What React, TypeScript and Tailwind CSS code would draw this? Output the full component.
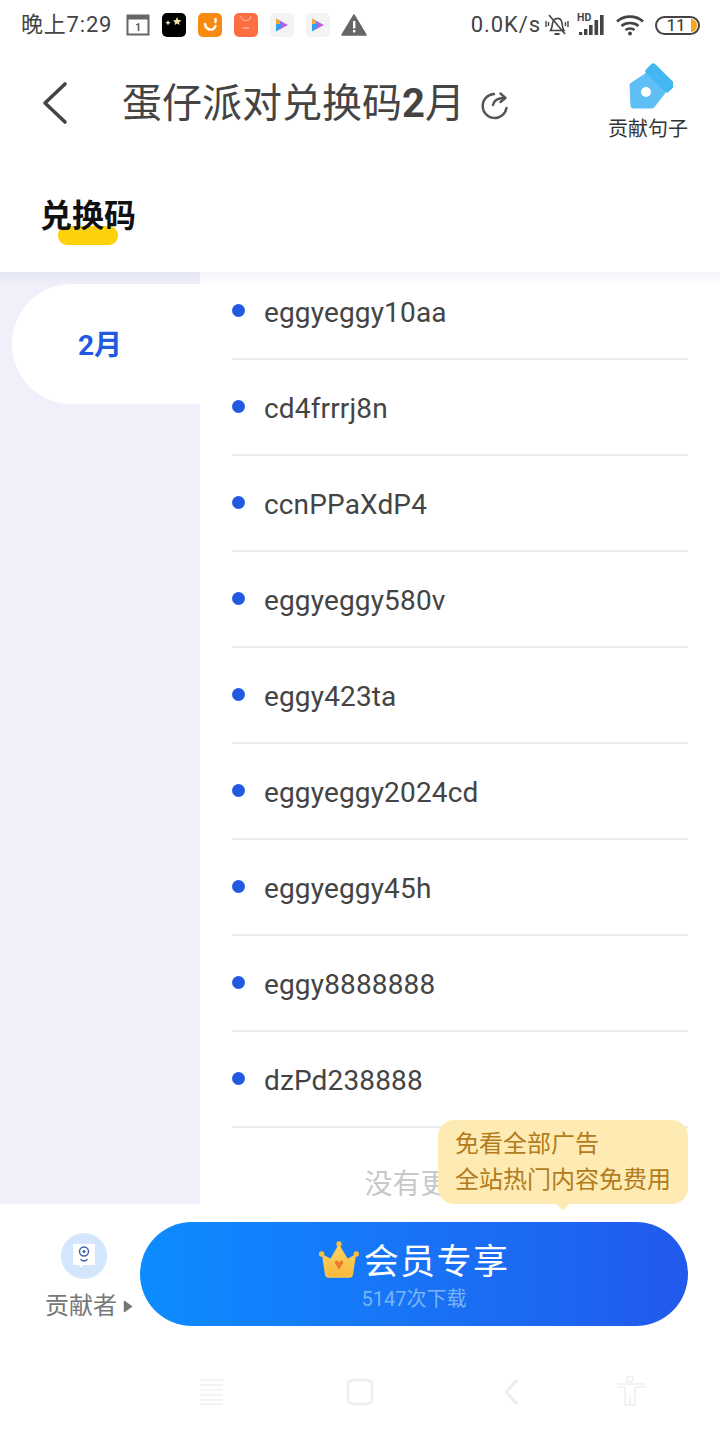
const FONT = "font-['Roboto','Noto_Sans_CJK_SC',sans-serif]";

const codes = [
  "eggyeggy10aa",
  "cd4frrrj8n",
  "ccnPPaXdP4",
  "eggyeggy580v",
  "eggy423ta",
  "eggyeggy2024cd",
  "eggyeggy45h",
  "eggy8888888",
  "dzPd238888",
];

const AppIcon = ({ className, children }: { className: string; children?: React.ReactNode }) => (
  <div className={`w-6 h-6 rounded-[5px] flex items-center justify-center shrink-0 overflow-hidden ${className}`}>
    {children}
  </div>
);

const PlayLogo = () => (
  <svg width="14" height="16" viewBox="0 0 14 16">
    <path d="M1 1.5 L7 5 L7 11 L1 14.5 Z" fill="#2f9ff0" />
    <path d="M4 3.2 L13 8 L4 12.8 L7 8 Z" fill="#c05ce8" />
    <path d="M1 1.5 L5 4 L5 7 L1 7 Z" fill="#f7a63a" />
  </svg>
);

const StatusBar = () => (
  <div className="h-[50px] flex items-center pl-[21px] pr-[20px] text-[#444444]">
    <span className="text-[22px] leading-none tracking-[0.8px] w-[93px] whitespace-nowrap">晚上7:29</span>
    <div className="flex items-center ml-[12px] gap-[12px]">
      <svg width="24" height="24" viewBox="0 0 24 24" className="shrink-0">
        <rect x="1.5" y="2.5" width="21" height="19" fill="none" stroke="#666" strokeWidth="2" />
        <rect x="1.5" y="2.5" width="21" height="4" fill="#666" />
        <text x="12" y="18" fontSize="10" textAnchor="middle" fill="#555" fontFamily="Roboto" fontWeight="700">1</text>
      </svg>
      <AppIcon className="bg-black">
        <svg width="22" height="22" viewBox="0 0 22 22">
          <path d="M14 3 L15.4 6 L18.5 6.5 L16 8.6 L16.6 11 L14 9.6 L11.6 11 L12 8.4 L10 6.4 L12.8 6 Z" fill="#f2e2a8" />
          <path d="M5 6 L5.8 8 L8 8.8 L5.8 9.6 L5 11.5 L4.2 9.6 L2 8.8 L4.2 8 Z" fill="#f5efd0" />
        </svg>
      </AppIcon>
      <AppIcon className="bg-[#f98a10]">
        <svg width="20" height="20" viewBox="0 0 20 20" fill="none">
          <path d="M5 9 C6 15 13 17 15.5 11" stroke="#fff" strokeWidth="2.4" strokeLinecap="round" />
          <path d="M15.5 4 V7" stroke="#fff" strokeWidth="2.4" strokeLinecap="round" />
        </svg>
      </AppIcon>
      <AppIcon className="bg-[#fb6f42]">
        <svg width="20" height="20" viewBox="0 0 20 20" fill="none">
          <path d="M5 1 C5 7 15 7 15 1" stroke="#ffb79f" strokeWidth="1.2" />
          <path d="M8 12 V14 M10 12 V14 M12 12 V14" stroke="#ffd9cc" strokeWidth="1" />
        </svg>
      </AppIcon>
      <AppIcon className="bg-[#f3f3f3]">
        <PlayLogo />
      </AppIcon>
      <AppIcon className="bg-[#f3f3f3]">
        <PlayLogo />
      </AppIcon>
      <svg width="26" height="24" viewBox="0 0 26 24" className="shrink-0 -ml-[1px]">
        <path d="M13 2 L25 22 H1 Z" fill="#666" stroke="#666" strokeWidth="1.5" strokeLinejoin="round" />
        <rect x="12" y="8" width="2.4" height="7.5" fill="#fff" />
        <rect x="12" y="17" width="2.4" height="2.4" fill="#fff" />
      </svg>
    </div>
    <div className="ml-auto flex items-center">
      <span className="text-[22px] leading-none tracking-[0.9px]">0.0K/s</span>
      <svg width="26" height="26" viewBox="0 0 26 26" fill="none" stroke="#444" strokeWidth="1.6" className="ml-[3px]">
        <path d="M6.5 18.5 C8.5 16 8 12 9 9.5 C10.5 6 15.5 5 17.5 9 C18.5 12 18 16 20 18.5 Z" />
        <path d="M10.5 22 H15.5" strokeWidth="2" />
        <path d="M5 3 L21 22" />
        <path d="M2 9 V15 M4.5 10 V14 M24 9 V15 M21.5 10 V14" strokeWidth="1.4" />
      </svg>
      <svg width="30" height="26" viewBox="0 0 30 26" className="ml-[6px]">
        <text x="1" y="9" fontSize="10.5" fontWeight="700" fill="#444" fontFamily="Roboto">HD</text>
        <rect x="3" y="20" width="3.2" height="3" fill="#444" />
        <rect x="8" y="17" width="3.4" height="6" fill="#444" />
        <rect x="13" y="13" width="3.6" height="10" fill="#444" />
        <rect x="18.5" y="8" width="3.6" height="15" fill="#444" />
        <rect x="24" y="3" width="3.6" height="20" fill="#444" />
      </svg>
      <svg width="30" height="24" viewBox="0 0 30 24" fill="none" stroke="#444" strokeWidth="2.6" className="ml-[9px]">
        <path d="M2 8.5 C9 2 21 2 28 8.5" />
        <path d="M6.5 13 C11 9 19 9 23.5 13" />
        <path d="M10.5 17 C13 15 17 15 19.5 17" />
        <circle cx="15" cy="20.5" r="2" fill="#444" stroke="none" />
      </svg>
      <div className="ml-[10px] relative w-[45px] h-[19px] rounded-full border-2 border-[#444] flex items-center justify-center overflow-hidden">
        <span className="text-[17px] leading-none text-[#333] mr-[3px]">11</span>
        <div className="absolute right-[1px] top-[1px] w-[6px] h-[13px] bg-[#f5a623] rounded-r-full" />
      </div>
    </div>
  </div>
);

const Header = () => (
  <div className="h-[110px] flex items-start relative">
    <svg width="30" height="48" viewBox="0 0 30 48" fill="none" stroke="#444" strokeWidth="3.6" strokeLinecap="round" strokeLinejoin="round" className="ml-[41px] mt-[29px] shrink-0">
      <path d="M24 5 L4 24 L24 43" />
    </svg>
    <div className="ml-[51px] mt-[30px] flex items-center">
      <span className="text-[40px] leading-[48px] text-[#444444] whitespace-nowrap">
        蛋仔派对兑换码<span className="font-bold">2</span>月
      </span>
      <svg width="30" height="30" viewBox="0 0 30 30" fill="none" stroke="#555" strokeWidth="2.4" strokeLinecap="round" strokeLinejoin="round" className="ml-[15px] mt-[1px]">
        <path d="M14 4 A12 12 0 1 0 26.5 18" />
        <path d="M13 15 C14 10 18 8 24 8" />
        <path d="M20.5 3.5 L25.5 8 L20.5 12" />
      </svg>
    </div>
    <div className="absolute left-[608px] top-[12px] w-[80px] flex flex-col items-center">
      <svg width="50" height="50" viewBox="0 0 50 50">
        <path d="M7 22 L25 10 L42 31 L31 45 A2 2 0 0 1 29 46 L10 46 A2 2 0 0 1 8 44 Z" fill="#5dbff6" stroke="#5dbff6" strokeWidth="1" strokeLinejoin="round" />
        <rect x="21" y="9.5" width="32" height="13" rx="3" transform="rotate(45 37 16)" fill="#43b7f2" />
        <circle cx="23" cy="30" r="5" fill="#fff" />
      </svg>
      <span className="text-[20px] leading-[24px] text-[#333333] mt-[5px] whitespace-nowrap">贡献句子</span>
    </div>
  </div>
);

const TabBar = () => (
  <div className="h-[112px] pl-[40px] pt-[36px]">
    <div className="relative w-fit">
      <div className="absolute left-[18px] top-[30px] w-[60px] h-[19px] rounded-[9px] bg-[#fdd20a]" />
      <span className="relative text-[32px] leading-[40px] font-bold text-[#111111] block whitespace-nowrap">兑换码</span>
    </div>
  </div>
);

const CodeRow = ({ code }: { code: string }) => (
  <div className="h-[96px] border-b-2 border-[#ececec] relative flex items-start">
    <div className="w-[13px] h-[13px] rounded-full bg-[#2159e0] mt-[40px] shrink-0" />
    <span className="ml-[19px] mt-[32px] text-[28px] leading-[34px] text-[#444444] tracking-[0.15px]">{code}</span>
  </div>
);

const Body = () => (
  <div className="h-[932px] flex relative overflow-hidden">
    <div className="w-[200px] bg-[#f0f0fa] pt-[12px] pl-[12px] shrink-0">
      <div className="h-[120px] bg-white rounded-l-[60px] flex items-center pl-[66px] pt-[3px]">
        <span className="text-[28px] font-bold text-[#2159e0] leading-none">2月</span>
      </div>
    </div>
    <div className="flex-1 bg-white pl-[32px] pr-[32px] -mt-[8px]">
      {codes.map((c) => (
        <CodeRow key={c} code={c} />
      ))}
      <div className="mt-[39px] pl-[5px] text-center text-[28px] leading-[36px] text-[#c8c8cc] whitespace-nowrap">没有更多内容了</div>
    </div>
    <div className="absolute left-0 right-0 top-0 h-[14px] bg-gradient-to-b from-[#2a3f80]/5 to-transparent" />
  </div>
);

const BottomBar = () => (
  <div className="h-[140px] bg-white flex items-start relative">
    <div className="w-[140px] shrink-0 flex flex-col items-start pl-[45px] pt-[29px]">
      <div className="w-[46px] h-[46px] ml-[16px] rounded-full bg-[#d3e6fb] flex items-center justify-center">
        <svg width="30" height="30" viewBox="0 0 30 30" fill="none">
          <path d="M4 3 H26 V24 H14 L12 27 L10 24 H4 Z" fill="#fff" />
          <circle cx="15" cy="10.5" r="4.5" stroke="#3f5fb0" strokeWidth="1.4" />
          <circle cx="15" cy="10.5" r="1.5" fill="#3f5fb0" />
          <path d="M12 18.5 C13 20.5 17 20.5 18 18.5" stroke="#3f5fb0" strokeWidth="1.4" strokeLinecap="round" />
        </svg>
      </div>
      <div className="flex items-center mt-[12px]">
        <span className="text-[24px] leading-[30px] text-[#777777] whitespace-nowrap">贡献者</span>
        <svg width="10" height="13" viewBox="0 0 10 13" className="ml-[6px]">
          <path d="M1.5 1.5 L8.5 6.5 L1.5 11.5 Z" fill="#777" stroke="#777" strokeWidth="1.5" strokeLinejoin="round" />
        </svg>
      </div>
    </div>
    <div className="w-[548px] h-[104px] mt-[18px] rounded-[52px] bg-gradient-to-r from-[#0b8cff] to-[#2159ec] flex flex-col items-center pt-[19px]">
      <div className="flex items-center h-[44px] -ml-[5px]">
        <svg width="50" height="50" viewBox="0 0 150 150" className="-mt-[6px] shrink-0">
          <defs>
            <linearGradient id="crown" x1="0" y1="0" x2="0" y2="1">
              <stop offset="0" stopColor="#fcd66a" />
              <stop offset="1" stopColor="#f8b73a" />
            </linearGradient>
          </defs>
          <path d="M26 60 L50 74 L75 30 L100 74 L124 60 L115 118 A10 10 0 0 1 105 126 L45 126 A10 10 0 0 1 35 118 Z" fill="url(#crown)" stroke="#fbc84e" strokeWidth="4" strokeLinejoin="round" />
          <circle cx="75" cy="27" r="8" fill="#f9bf45" />
          <circle cx="23" cy="57" r="8" fill="#f9bf45" />
          <circle cx="127" cy="57" r="8" fill="#f9bf45" />
          <path d="M75 104 L62 84 C62 74 72 74 75 84 C78 74 88 74 88 84 Z" fill="#ee7a2a" />
        </svg>
        <span className="text-[35px] leading-[44px] text-white tracking-[1.4px] whitespace-nowrap">会员专享</span>
      </div>
      <span className="text-[20px] leading-[26px] text-[#79b4f8] whitespace-nowrap mt-[1px]">5147次下载</span>
    </div>
  </div>
);

const Tooltip = () => (
  <div className="absolute left-[438px] top-[1120px] w-[250px] h-[84px] rounded-[16px] bg-[#fdebb3] pl-[17px] pt-[6px] text-[24px] leading-[36px] text-[#b47c1e] whitespace-nowrap">
    <div>免看全部广告</div>
    <div>全站热门内容免费用</div>
    <div className="absolute left-[113px] bottom-[-7px] w-[24px] h-[14px] overflow-hidden">
      <div className="w-[18px] h-[18px] rotate-45 bg-[#fdebb3] rounded-[3px] mx-auto -mt-[8px]" />
    </div>
  </div>
);

const NavBar = () => (
  <div className="h-[96px] bg-white relative">
    <svg width="460" height="32" viewBox="0 0 460 32" fill="none" stroke="#efefef" strokeWidth="1.5" className="absolute left-[194px] top-[32px]">
      <path d="M6 4 H29 M6 9 H29 M6 14 H29 M6 19 H29 M6 24 H29 M6 28 H29" />
      <rect x="154" y="4" width="24" height="24" rx="5" strokeWidth="3" />
      <path d="M323 4 L312 16 L323 28" strokeWidth="3.4" strokeLinejoin="round" />
      <circle cx="436" cy="3" r="3" />
      <path d="M423 8 H451 M423 11 H431 V29 H441 V11 H451 M436 20 V29" />
    </svg>
  </div>
);

export default function App() {
  return (
    <div className={`relative w-[720px] h-[1440px] bg-white overflow-hidden ${FONT}`}>
      <StatusBar />
      <Header />
      <TabBar />
      <Body />
      <BottomBar />
      <NavBar />
      <Tooltip />
    </div>
  );
}
